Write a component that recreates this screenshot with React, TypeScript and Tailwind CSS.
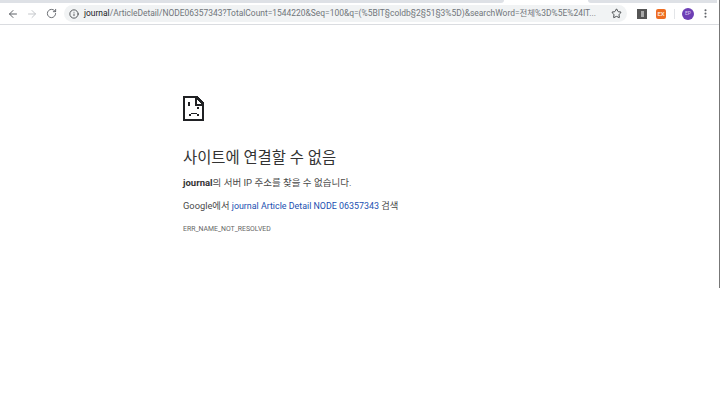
import { ArrowLeft, ArrowRight, Info, MoreVertical, RotateCw, Star } from "lucide-react"

const sans = "font-['Roboto','Noto_Sans_CJK_KR',sans-serif]"

function SadPage() {
  return (
    <svg width="22" height="25" viewBox="0 0 22 25" shapeRendering="crispEdges" className="block">
      <path d="M1 1H14V2H15V3H16V4H17V5H18V6H19V7H20V24H1Z" fill="none" stroke="#202124" strokeWidth="2" />
      <path d="M13 1V9H21" fill="none" stroke="#202124" strokeWidth="2" />
      <path d="M5 6h2v4H5zM14 11h2v2h-2zM8 17h6v1H8zM6 18h2v2H6zM14 18h2v2h-2z" fill="#202124" />
    </svg>
  )
}

export default function App() {
  return (
    <div className={`relative flex h-[408px] w-[720px] flex-col overflow-hidden bg-white ${sans}`}>
      {/* tab strip, the active tab is the white gap */}
      <div className="flex h-[3px]">
        <div className="w-[504px] rounded-br-[3px] bg-[#dee1e6]" />
        <div className="w-[84px] bg-white" />
        <div className="w-[129px] rounded-bl-[3px] bg-[#dee1e6]" />
      </div>
      <div className="flex h-[22px] items-center border-b border-[#dadce0] bg-white">
        <div className="ml-[7px] flex w-[57px] items-center gap-[7px]">
          <ArrowLeft size={12} strokeWidth={2} className="text-[#5f6368]" />
          <ArrowRight size={12} strokeWidth={2} className="text-[#c4c7cb]" />
          <RotateCw size={11} strokeWidth={2} className="ml-px text-[#5f6368]" />
        </div>
        <div className="flex h-[17px] w-[563px] items-center rounded-full bg-[#f1f3f4] pl-[5px]">
          <Info size={10} strokeWidth={2} className="mr-[5px] shrink-0 text-[#3c4043]" />
          <span className="whitespace-nowrap text-[8.45px] text-[#70757a]">
            <span className="text-[#202124]">journal</span>/ArticleDetail/NODE06357343?TotalCount=1544220&amp;Seq=100&amp;q=(%5BIT§coldb§2§51§3%5D)&amp;searchWord=전체%3D%5E%24IT...
          </span>
          <Star size={11} strokeWidth={2} className="ml-auto mr-[5px] shrink-0 text-[#3c4043]" />
        </div>
        <div className="ml-[10px] flex h-[10px] w-[10px] justify-center bg-[#555] py-[2px]">
          <div className="h-full w-[3px] bg-[#aaa]" />
        </div>
        <div className="ml-[9px] flex h-[10px] w-[10px] items-center justify-center rounded-[2px] bg-[#ee6d22] text-[6px] font-bold text-[#fde3d0]">EX</div>
        <div className="ml-[8px] h-[10px] w-px bg-[#e3e5e8]" />
        <div className="ml-[7px] flex h-[12px] w-[12px] items-center justify-center rounded-full bg-[#6d3fb5] text-[5px] text-[#d9c8f0]">EP</div>
        <MoreVertical size={11} strokeWidth={2.5} className="ml-[6px] text-[#5f6368]" />
      </div>
      <main className="pl-[183px] pt-[71px]">
        <SadPage />
        <h1 className="mt-[27px] text-[15.4px] leading-[20px] text-[#333]">사이트에 연결할 수 없음</h1>
        <p className="mt-[8px] text-[9.5px] leading-[14px] text-[#4a4a4a]">
          <b className="text-[#333]">journal</b>의 서버 IP 주소를 찾을 수 없습니다.
        </p>
        <p className="mt-[9px] text-[9.3px] leading-[14px] text-[#4a4a4a]">
          Google에서 <span className="text-[8.9px] text-[#1a4fb0]">journal Article Detail NODE 06357343</span> 검색
        </p>
        <p className="mt-[10px] text-[6.9px] leading-[12px] text-[#666]">ERR_NAME_NOT_RESOLVED</p>
      </main>
      <div className="absolute right-0 top-0 h-[288px] w-px bg-[#777]" />
    </div>
  )
}
